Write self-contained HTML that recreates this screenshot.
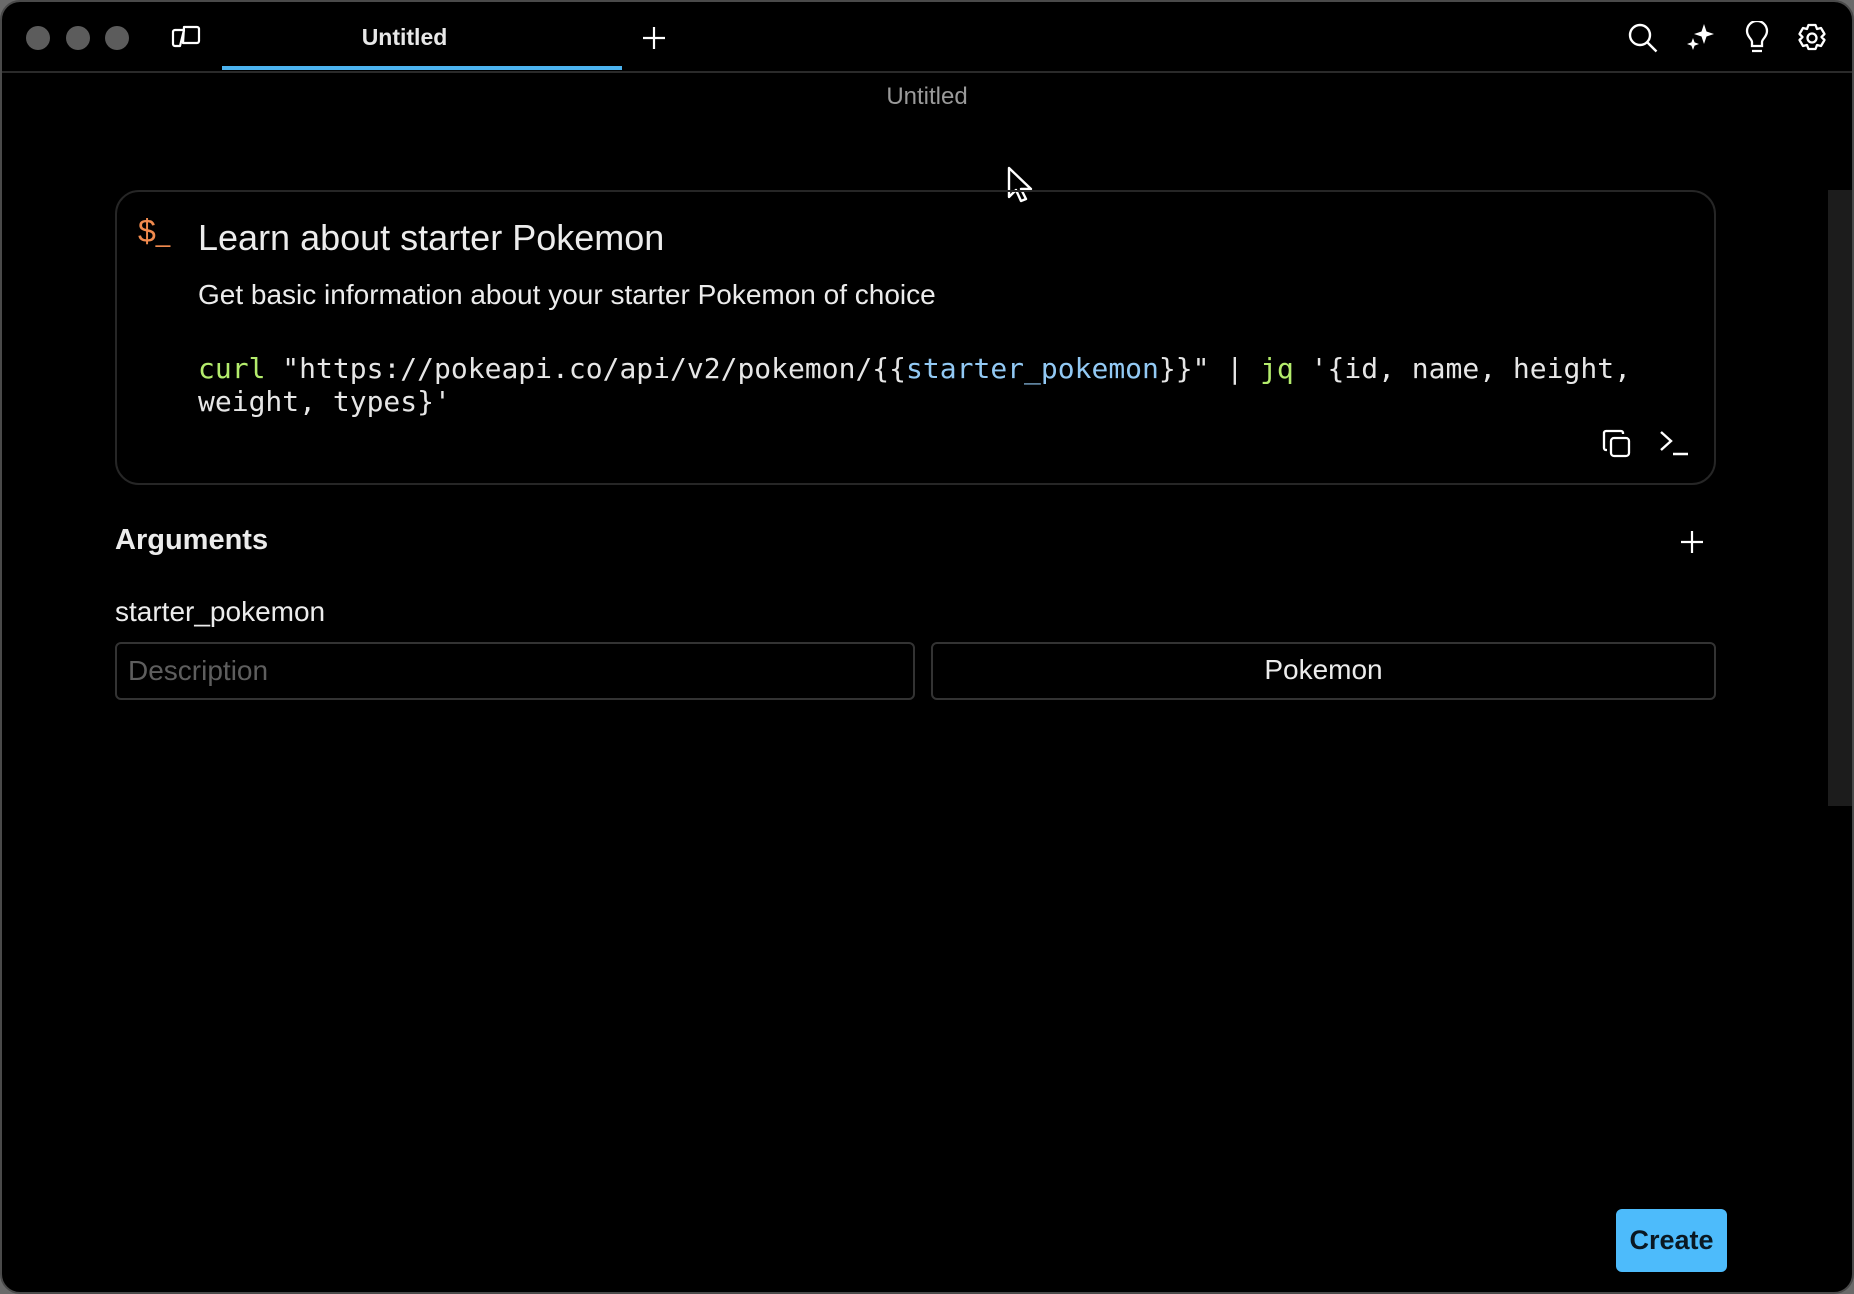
<!DOCTYPE html>
<html><head><meta charset="utf-8"><style>
*{margin:0;padding:0;box-sizing:border-box}
html,body{width:1854px;height:1294px;background:#6a6a6a;overflow:hidden}
body{font-family:"Liberation Sans",sans-serif;position:relative}
.win{position:absolute;left:0;top:0;width:1854px;height:1294px;background:#000;border:2px solid #4a4a4a;border-radius:20px;overflow:hidden}
.abs{position:absolute}
.dot{position:absolute;width:24px;height:24px;border-radius:50%;background:#5c5c5c;top:24px}
.t{position:absolute;white-space:nowrap}
.code{font-family:"DejaVu Sans Mono","Liberation Mono",monospace;font-size:28px;color:#e6e6e6;line-height:33px}
.g{color:#b4ec6c}.b{color:#92c9f4}
</style></head><body>
<div class="win">
<div class="dot" style="left:24px"></div><div class="dot" style="left:64px"></div><div class="dot" style="left:103px"></div>
<svg class="abs" style="left:168px;top:22px" width="32" height="26" viewBox="0 0 32 26" fill="none" stroke="#fff" stroke-width="2.2" stroke-linejoin="round"><path d="M7 6h7l-4 16H5a2 2 0 0 1-2-2V8a2 2 0 0 1 2-2z"/><path d="M14 3h13a2 2 0 0 1 2 2v12a2 2 0 0 1-2 2H13z"/></svg>
<div class="t" style="left:220px;width:365px;top:22px;text-align:center;color:#e8e8e8;font-weight:bold;font-size:23px">Untitled</div>
<div class="abs" style="left:220px;top:64px;width:400px;height:4px;background:#4cb3ef"></div>
<svg class="abs" style="left:640px;top:24px" width="24" height="24" stroke="#fff" stroke-width="2.2"><path d="M12 1v22M1 12h22"/></svg>
<div class="abs" style="left:0;top:69px;width:1854px;height:2px;background:#2a2a2a"></div>
<svg class="abs" style="left:1625px;top:20px" width="32" height="32" fill="none" stroke="#fff" stroke-width="2.4"><circle cx="13" cy="13" r="10"/><path d="M20.5 20.5l9 9"/></svg>
<svg class="abs" style="left:1682px;top:20px" width="32" height="32" fill="#fff"><path d="M20 2l2.5 7.5L30 12l-7.5 2.5L20 22l-2.5-7.5L10 12l7.5-2.5z"/><path d="M9 16l1.6 4.4L15 22l-4.4 1.6L9 28l-1.6-4.4L3 22l4.4-1.6z"/></svg>
<svg class="abs" style="left:1742px;top:19px" width="26" height="34" fill="none" stroke="#fff" stroke-width="2.3"><path d="M8 25v-4c0-3-5-5-5-11a10 10 0 0 1 20 0c0 6-5 8-5 11v4z"/><path d="M8 30h10"/></svg>
<svg class="abs" style="left:1794px;top:20px" width="32" height="32" fill="none" stroke="#fff" stroke-width="2.3" stroke-linejoin="round"><path d="M12.5 3h7l1.5 4 4-1 3.5 6-3 3 3 3-3.5 6-4-1-1.5 4h-7l-1.5-4-4 1-3.5-6 3-3-3-3 3.5-6 4 1z"/><circle cx="16" cy="16" r="4.5"/></svg>
<div class="t" style="left:0;width:1850px;top:81px;text-align:center;color:#9a9a9a;font-size:24px">Untitled</div>
<svg class="abs" style="left:1005px;top:164px" width="30" height="40"><path d="M2 2v29l7-7 5 11 5-2-5-10h10z" fill="#000" stroke="#fff" stroke-width="2.4" stroke-linejoin="round"/></svg>
<div class="abs" style="left:1826px;top:188px;width:28px;height:616px;background:#1c1c1c"></div>
<div class="abs" style="left:113px;top:188px;width:1601px;height:295px;border:2px solid #262626;border-radius:24px"></div>
<div class="t" style="left:136px;top:211px;color:#f08a4e;font-size:32px">$<span style="font-size:26px">_</span></div>
<div class="t" style="left:196px;top:215px;color:#ececec;font-size:36px">Learn about starter Pokemon</div>
<div class="t" style="left:196px;top:277px;color:#ececec;font-size:28px">Get basic information about your starter Pokemon of choice</div>
<div class="t code" style="left:196px;top:350px"><span class="g">curl</span> "https://pokeapi.co/api/v2/pokemon/{{<span class="b">starter_pokemon</span>}}" | <span class="g">jq</span> '{id, name, height,<br>weight, types}'</div>
<svg class="abs" style="left:1599px;top:426px" width="32" height="32" fill="none" stroke="#fff" stroke-width="2.3"><rect x="10" y="10" width="18" height="18" rx="3"/><path d="M6 22H5a2 2 0 0 1-2-2V5a2 2 0 0 1 2-2h15a2 2 0 0 1 2 2v1"/></svg>
<svg class="abs" style="left:1656px;top:427px" width="34" height="30" fill="none" stroke="#fff" stroke-width="2.4"><path d="M3 3l10 9-10 9M15 25h15"/></svg>
<div class="t" style="left:113px;top:522px;color:#ececec;font-size:29px;font-weight:bold">Arguments</div>
<svg class="abs" style="left:1678px;top:528px" width="24" height="24" stroke="#fff" stroke-width="2.2"><path d="M12 1v22M1 12h22"/></svg>
<div class="t" style="left:113px;top:594px;color:#ececec;font-size:28px">starter_pokemon</div>
<div class="abs" style="left:113px;top:640px;width:800px;height:58px;border:2px solid #333;border-radius:6px"></div>
<div class="t" style="left:126px;top:653px;color:#5e5e5e;font-size:28px">Description</div>
<div class="abs" style="left:929px;top:640px;width:785px;height:58px;border:2px solid #333;border-radius:6px"></div>
<div class="t" style="left:929px;width:785px;top:652px;text-align:center;color:#ececec;font-size:28px">Pokemon</div>
<div class="abs" style="left:1614px;top:1207px;width:111px;height:63px;background:#4dbbfb;border-radius:6px;color:#0a1822;font-weight:bold;font-size:27px;text-align:center;line-height:63px">Create</div>
</div>
</body></html>
